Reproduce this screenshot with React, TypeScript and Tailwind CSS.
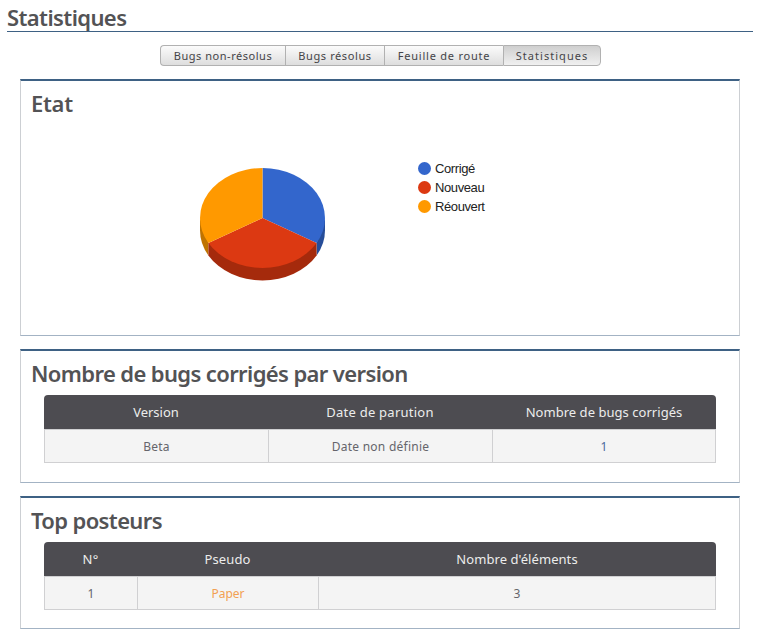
import React from "react";

const ui = "font-['Noto_Sans',sans-serif]";

function Title({ children, className }: { children: React.ReactNode; className: string }) {
  return (
    <h2 className="pl-[10px] text-[22px] leading-[30px] font-semibold text-[#535355] whitespace-nowrap">
      <span className={className}>{children}</span>
    </h2>
  );
}

function Panel({ className, children }: { className: string; children: React.ReactNode }) {
  return (
    <section className={`w-[720px] border border-t-2 border-x-[#cccfd3] border-b-[#a3b3c4] border-t-[#3e6184] ${className}`}>
      {children}
    </section>
  );
}

type Cell = { text: string; className: string };

function Table({ columns, head, row }: { columns: string; head: Cell[]; row: Cell[] }) {
  return (
    <div className="ml-[23px] w-[672px] whitespace-nowrap text-[13px] text-[#65656b]">
      <div className={`grid ${columns} h-[34px] items-center rounded-t-[4px] bg-[#4d4c51] pt-[2px] text-center text-[#ececec]`}>
        {head.map((c) => (
          <div key={c.text}><span className={c.className}>{c.text}</span></div>
        ))}
      </div>
      <div className={`grid ${columns} h-[34px] border-y border-r border-[#d0d0d2] bg-[#f4f4f4] text-center`}>
        {row.map((c, i) => (
          <div key={i} className="border-l border-[#d0d0d2] pt-px leading-[31px]"><span className={c.className}>{c.text}</span></div>
        ))}
      </div>
    </div>
  );
}

function Pie() {
  return (
    <svg className="block h-[130px] w-[150px]" viewBox="190 155 150 130">
      <path d="M200 218V230.5A62.5 50 0 0 0 208.4 255.5V243Z" fill="#bf7300" />
      <path d="M325 218V230.5A62.5 50 0 0 1 316.6 255.5V243Z" fill="#264d99" />
      <path d="M208.4 243V255.5A62.5 50 0 0 0 316.6 255.5V243Z" fill="#a52a0c" />
      <path d="M262.5 218V168A62.5 50 0 0 1 316.6 243Z" fill="#3366cc" />
      <path d="M262.5 218L316.6 243A62.5 50 0 0 1 208.4 243Z" fill="#dc3912" />
      <path d="M262.5 218L208.4 243A62.5 50 0 0 1 262.5 168Z" fill="#ff9900" />
    </svg>
  );
}

const tabs = [
  { text: "Bugs non-résolus", box: "w-[125px] rounded-l-[4px] border-l bg-linear-to-b from-[#fbfbfb] to-[#dedede]", span: "tracking-[0.53px]" },
  { text: "Bugs résolus", box: "w-[99px] border-l bg-linear-to-b from-[#fbfbfb] to-[#dedede]", span: "tracking-[0.6px]" },
  { text: "Feuille de route", box: "w-[119px] border-l bg-linear-to-b from-[#fbfbfb] to-[#dedede]", span: "tracking-[0.77px]" },
  { text: "Statistiques", box: "w-[98px] rounded-r-[4px] border-x bg-linear-to-b from-[#cfcfcf] to-[#f0f0f0]", span: "tracking-[1.05px]" },
];

const legend = [
  { text: "Corrigé", dot: "bg-[#3366cc]" },
  { text: "Nouveau", dot: "bg-[#dc3912]" },
  { text: "Réouvert", dot: "bg-[#ff9900]" },
];

export default function App() {
  return (
    <div className={`h-[644px] w-[757px] overflow-hidden bg-white ${ui}`}>
      <h1 className="ml-[7px] h-8 w-[746px] border-b border-b-[#3e6184] pt-[2px] text-[22px] leading-[30px] font-semibold text-[#535355]">
        <span className="tracking-[-0.6px]">Statistiques</span>
      </h1>
      <nav className="mt-[13px] ml-[160px] flex h-[21px] text-center text-[11px] leading-[20px] whitespace-nowrap text-[#444448]">
        {tabs.map((t) => (
          <div key={t.text} className={`h-[21px] border-y border-[#b1b1b1] ${t.box}`}>
            <span className={t.span}>{t.text}</span>
          </div>
        ))}
      </nav>

      <main className="ml-5 flex flex-col gap-[13px] pt-[13px]">
        <Panel className="h-[257px] pt-[7px]">
          <Title className="tracking-[-0.3px]">Etat</Title>
          <div className="mt-[37px] ml-[169px] flex">
            <Pie />
            <ul className="mt-[4px] ml-[78px] font-['Liberation_Sans',sans-serif] text-[13px] leading-[19px] text-[#222]">
              {legend.map((l) => (
                <li key={l.text} className="flex h-[19px] items-center">
                  <span className={`mr-1 size-[13px] rounded-full ${l.dot}`} />
                  <span className="tracking-[-0.4px]">{l.text}</span>
                </li>
              ))}
            </ul>
          </div>
        </Panel>

        <Panel className="h-[134px] pt-[7px]">
          <Title className="tracking-[-0.62px]">Nombre de bugs corrigés par version</Title>
          <div className="h-[7px]" />
          <Table
            columns="grid-cols-[224px_224px_1fr]"
            head={[
              { text: "Version", className: "tracking-[0px]" },
              { text: "Date de parution", className: "tracking-[0.25px]" },
              { text: "Nombre de bugs corrigés", className: "tracking-[0.04px]" },
            ]}
            row={[
              { text: "Beta", className: "text-[12px] tracking-[0.2px]" },
              { text: "Date non définie", className: "text-[12px] tracking-[0.25px]" },
              { text: "1", className: "text-[12px] text-[#4a6a9c]" },
            ]}
          />
        </Panel>

        <Panel className="h-[133px] pt-[7px]">
          <Title className="tracking-[-0.63px]">Top posteurs</Title>
          <div className="h-[7px]" />
          <Table
            columns="grid-cols-[93px_181px_1fr]"
            head={[
              { text: "N°", className: "tracking-[0.3px]" },
              { text: "Pseudo", className: "tracking-[0.15px]" },
              { text: "Nombre d'éléments", className: "tracking-[0.06px]" },
            ]}
            row={[
              { text: "1", className: "text-[12px]" },
              { text: "Paper", className: "text-[12px] tracking-[0px] text-[#f2a052]" },
              { text: "3", className: "text-[12px]" },
            ]}
          />
        </Panel>
      </main>
    </div>
  );
}
